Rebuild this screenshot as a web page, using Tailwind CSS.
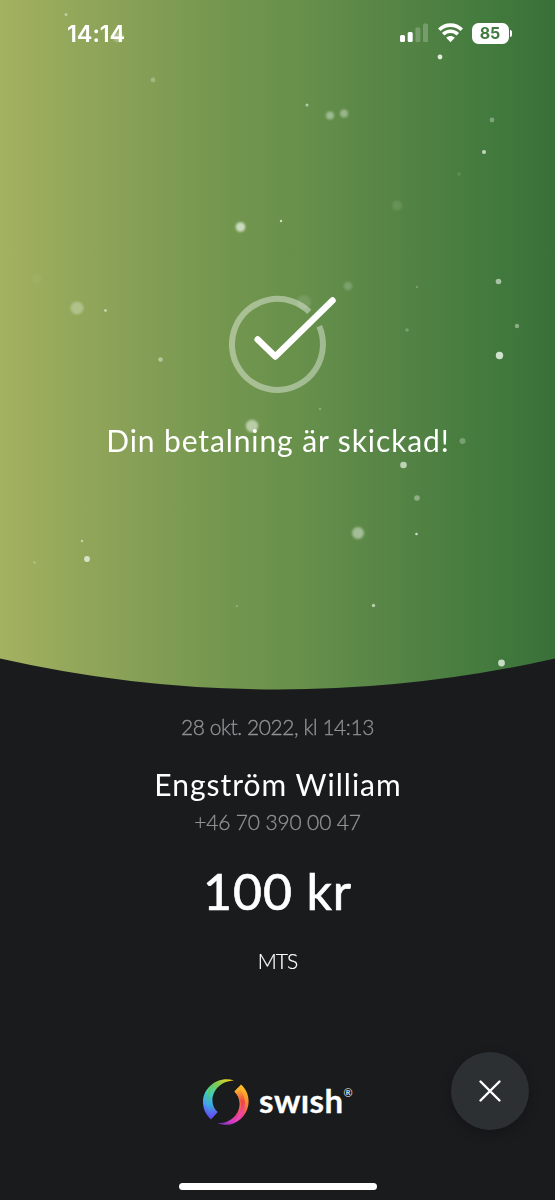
<!DOCTYPE html>
<html lang="sv">
<head>
<meta charset="utf-8">
<title>Swish</title>
<script src="https://cdn.jsdelivr.net/npm/@tailwindcss/browser@4"></script>
</head>
<body class="bg-[#1a1b1d]">
<div class="relative flex h-[1200px] w-[555px] flex-col overflow-hidden bg-[#1a1b1d] font-['Lato','Noto_Sans',sans-serif] text-white">
  <!-- Gradient backdrop with floating particles -->
  <svg class="absolute inset-0" width="555" height="700" viewBox="0 0 555 700" fill="#e9f3e4">
    <defs>
      <linearGradient id="g" x1="0" x2="1" y1="0" y2="0"><stop offset="0" stop-color="#a3b260"/><stop offset=".09" stop-color="#98aa5c"/><stop offset=".25" stop-color="#869f56"/><stop offset=".37" stop-color="#779850"/><stop offset=".54" stop-color="#67904b"/><stop offset=".7" stop-color="#578546"/><stop offset=".9" stop-color="#41793d"/><stop offset="1" stop-color="#397038"/></linearGradient>
      <filter id="b" x="-50%" y="-50%" width="200%" height="200%"><feGaussianBlur stdDeviation="1.200"/></filter>
      <filter id="s" x="-50%" y="-50%" width="200%" height="200%"><feGaussianBlur stdDeviation=".6"/></filter>
    </defs>
    <path fill="url(#g)" d="M0 0H555V658.5A1257 1257 0 0 1 0 658.5Z"/>
    <g filter="url(#b)">
      <circle cx="240.500" cy="227" r="4.800" opacity=".75"/><circle cx="77" cy="308" r="6.500" opacity=".35"/>
      <circle cx="252" cy="426" r="6.200" opacity=".6"/><circle cx="358" cy="533" r="6" opacity=".5"/>
      <circle cx="304" cy="302" r="7" opacity=".13"/><circle cx="348" cy="286" r="4.300" opacity=".22"/>
      <circle cx="397" cy="205.500" r="5" opacity=".12"/><circle cx="37" cy="279" r="5" opacity=".06"/>
      <circle cx="330" cy="115.500" r="4" opacity=".45"/><circle cx="344" cy="113.500" r="4" opacity=".42"/>
      <circle cx="118" cy="37" r="5" opacity=".4"/>
    </g>
    <g filter="url(#s)">
      <circle cx="66" cy="14.500" r="1.500" opacity=".5"/><circle cx="153" cy="80" r="2.400" opacity=".3"/>
      <circle cx="307" cy="105" r="1.500" opacity=".6"/><circle cx="440" cy="57" r="2.400" opacity=".95"/>
      <circle cx="492" cy="120" r="2.400" opacity=".35"/><circle cx="484" cy="152" r="2" opacity=".75"/>
      <circle cx="459" cy="174" r="2" opacity=".1"/><circle cx="281" cy="221" r="1.200" opacity=".8"/>
      <circle cx="498.500" cy="281.500" r="2.800" opacity=".6"/><circle cx="417" cy="287" r="1.200" opacity=".25"/>
      <circle cx="105.500" cy="310.500" r="1.200" opacity=".8"/><circle cx="407" cy="330" r="1.800" opacity=".25"/>
      <circle cx="517" cy="326" r="2.200" opacity=".45"/><circle cx="499.500" cy="355.500" r="3.700" opacity=".85"/>
      <circle cx="160.500" cy="359.500" r="2.300" opacity=".5"/><circle cx="320" cy="409" r="1.200" opacity=".3"/>
      <circle cx="462.500" cy="441" r="3" opacity=".3"/><circle cx="403.500" cy="465" r="3.300" opacity=".7"/>
      <circle cx="417" cy="498" r="2.800" opacity=".4"/><circle cx="416.500" cy="534" r="1.300" opacity=".8"/>
      <circle cx="82" cy="541" r="1.200" opacity=".6"/><circle cx="87" cy="559" r="2.900" opacity=".8"/>
      <circle cx="34.500" cy="562.500" r="1.200" opacity=".3"/><circle cx="237" cy="606" r="1.200" opacity=".25"/>
      <circle cx="373.500" cy="605.500" r="1.700" opacity=".65"/><circle cx="501.500" cy="663" r="3.400" opacity=".8"/>
    </g>
  </svg>

  <header class="relative flex h-[66px] items-center justify-between pl-[67px] pr-[43px]">
    <span class="mt-[2px] font-['Inter',sans-serif] text-[23.500px] font-semibold leading-none tracking-[-0.1px]">14:14</span>
    <div class="flex items-center">
      <svg width="28" height="20" viewBox="0 0 28 20" fill="#fff"><rect y="12" width="5" height="7" rx="1.500"/><rect x="7.700" y="9" width="5" height="10" rx="1.500"/><rect x="15.400" y="4.500" width="5" height="14.500" rx="1.500" opacity=".22"/><rect x="23" y=".5" width="5" height="18.500" rx="1.500" opacity=".22"/></svg>
      <svg class="ml-[10px]" width="25" height="20" viewBox="0 0 25 20" fill="none" stroke="#fff" stroke-width="3.600"><path d="M1.300 6.800C7.500 .6 17.500 .6 23.700 6.800M5.200 11.300C9.200 7.300 15.800 7.300 19.800 11.300"/><path d="M8.200 14.800C10.700 12.300 14.300 12.300 16.800 14.800L12.500 19.200Z" fill="#fff" stroke="none"/></svg>
      <div class="ml-[9px] flex h-[21px] w-[37px] items-center justify-center rounded-[6.500px] bg-white font-['Inter',sans-serif] text-[16px] font-bold leading-none text-[#427b40]">85</div>
      <div class="ml-px h-[7px] w-[2.500px] rounded-r-full bg-white"></div>
    </div>
  </header>

  <main class="relative flex flex-col items-center whitespace-nowrap">
    <svg class="ml-[9px] mt-[224px]" width="120" height="110" viewBox="222 290 120 110" fill="none">
      <path d="M309.300 311.900A45.500 45.500 0 1 0 319.200 326.300" stroke="#fff" stroke-opacity=".4" stroke-width="6"/>
      <path d="M257.700 339.500L275.300 356.500L332.500 300.500" stroke="#fff" stroke-width="6.500" stroke-linecap="round" stroke-linejoin="round"/>
    </svg>
    <h1 class="mt-[22px] pl-px text-[30px] leading-9 tracking-[0.9px]">Din betalning är skickad!</h1>
    <p class="mt-[257px] text-[21px] font-light leading-6 tracking-[-0.45px] text-[#929294] [-webkit-text-stroke:0.3px_#929294]">28 okt. 2022, kl 14:13</p>
    <h2 class="mt-[27px] pl-px text-[30px] leading-9 tracking-[1px]">Engström William</h2>
    <p class="mt-[8px] text-[21px] font-light leading-6 tracking-[-0.15px] text-[#929294] [-webkit-text-stroke:0.3px_#929294]">+46 70 390 00 47</p>
    <p class="mt-[27px] text-[50px] leading-[60px] tracking-[0.9px] [-webkit-text-stroke:0.7px_#fff]">100 kr</p>
    <p class="mt-[28px] text-[21px] font-light leading-6 tracking-[-0.9px] [-webkit-text-stroke:0.2px_#fff]">MTS</p>
  </main>

  <!-- Brand -->
  <footer class="relative mt-[104px] flex h-[52px] pl-[202px]">
    <svg width="48" height="50" viewBox="202 1077 48 50">
      <defs>
        <linearGradient id="l1" x1="230" y1="1079" x2="208" y2="1118" gradientUnits="userSpaceOnUse"><stop stop-color="#f5d322"/><stop offset=".25" stop-color="#7fca50"/><stop offset=".5" stop-color="#3fd0b8"/><stop offset=".75" stop-color="#459df0"/><stop offset="1" stop-color="#643ff0"/></linearGradient>
        <linearGradient id="l2" x1="208" y1="1090" x2="216" y2="1117" gradientUnits="userSpaceOnUse"><stop stop-color="#65c85a"/><stop offset=".5" stop-color="#35aee0"/><stop offset="1" stop-color="#7040f5"/></linearGradient>
        <linearGradient id="r1" x1="241" y1="1086" x2="224" y2="1125" gradientUnits="userSpaceOnUse"><stop stop-color="#fdbd26"/><stop offset=".35" stop-color="#f98230"/><stop offset=".62" stop-color="#ee4377"/><stop offset=".85" stop-color="#d33cc5"/><stop offset="1" stop-color="#8135bd"/></linearGradient>
        <linearGradient id="r2" x1="236" y1="1088" x2="245" y2="1116" gradientUnits="userSpaceOnUse"><stop stop-color="#fac42c"/><stop offset=".5" stop-color="#ef4545"/><stop offset="1" stop-color="#ee48c2"/></linearGradient>
      </defs>
      <path fill="url(#l1)" d="M234 1080.500C219 1075.500 203 1087 203 1102C203 1109 206 1115 211 1119.500L217.500 1112C207 1103 213 1081.500 234 1080.500Z"/>
      <path fill="url(#l2)" d="M217 1081.500C204 1088 203.500 1107 213.500 1116.500L217.500 1112C207 1104 207 1089 217 1081.500Z"/>
      <path fill="url(#r1)" d="M241 1084.500C254 1096 249.500 1117 234 1123.300C229 1125.400 222.500 1125.300 217.500 1123C237 1124 246 1103 234.500 1091.500Z"/>
      <path fill="url(#r2)" d="M234.500 1091.500L238.300 1087.500C249 1099 246 1115 234.500 1122.500C242 1112 244 1101 234.500 1091.500Z"/>
    </svg>
    <div class="ml-[9px] flex items-start">
      <span class="mt-[3px] text-[33px] font-bold leading-10 tracking-[0.4px] [-webkit-text-stroke:0.3px_#fff]">swısh</span>
      <span class="mt-[10px] text-[11px] leading-3">®</span>
    </div>
  </footer>
  <button aria-label="Stäng" class="absolute left-[451px] top-[1052px] flex size-[78px] items-center justify-center rounded-full bg-[#2d3033] shadow-[0_4px_12px_rgba(0,0,0,0.25)]">
    <svg width="24" height="24" viewBox="0 0 24 24" fill="none" stroke="#fff" stroke-width="2.400" stroke-linecap="round"><path d="M2.500 2.500L21.500 21.500M21.500 2.500L2.500 21.500"/></svg>
  </button>
  <div class="absolute bottom-[10px] left-[179px] h-[7px] w-[198px] rounded-full bg-white"></div>
</div>
</body>
</html>
